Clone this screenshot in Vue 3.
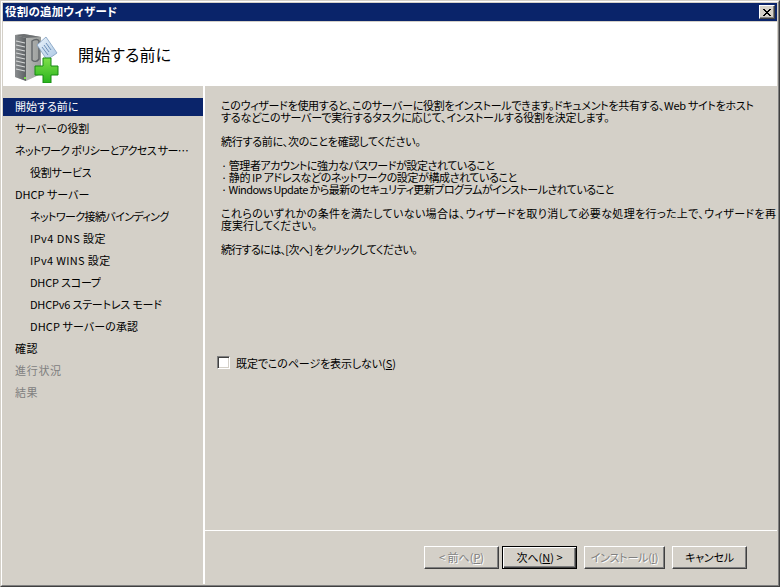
<script setup>
const steps = [
  { label: '開始する前に', active: true },
  { label: 'サーバーの役割', track: -0.1 },
  { label: 'ネットワーク ポリシーとアクセス サービス', track: -0.62 },
  { label: '役割サービス', sub: true, track: -0.3 },
  { label: 'DHCP サーバー' },
  { label: 'ネットワーク接続バインディング', sub: true, track: -0.6 },
  { label: 'IPv4 DNS 設定', sub: true, track: 0.45 },
  { label: 'IPv4 WINS 設定', sub: true, track: 0.35 },
  { label: 'DHCP スコープ', sub: true, track: -0.2 },
  { label: 'DHCPv6 ステートレス モード', sub: true, track: -0.2 },
  { label: 'DHCP サーバーの承認', sub: true, track: 0.1 },
  { label: '確認', track: 0.5 },
  { label: '進行状況', off: true, track: 0.7 },
  { label: '結果', off: true, track: 0.5 },
]

const lines = [
  { text: 'このウィザードを使用すると、このサーバーに役割をインストールできます。ドキュメントを共有する、Web サイトをホスト', track: -0.3 },
  { text: 'するなどこのサーバーで実行するタスクに応じて、インストールする役割を決定します。', track: -0.2, gap: true },
  { text: '続行する前に、次のことを確認してください。', track: -0.24, gap: true },
  { text: '· 管理者アカウントに強力なパスワードが設定されていること', track: -0.43 },
  { text: '· 静的 IP アドレスなどのネットワークの設定が構成されていること', track: -0.4 },
  { text: '· Windows Update から最新のセキュリティ更新プログラムがインストールされていること', track: -0.55, gap: true },
  { text: 'これらのいずれかの条件を満たしていない場合は、ウィザードを取り消して必要な処理を行った上で、ウィザードを再', track: 0.36 },
  { text: '度実行してください。', track: 0, gap: true },
  { text: '続行するには、[次へ] をクリックしてください。', track: -0.65 },
]

const trackStyle = (track) => (track ? { letterSpacing: `${track}px` } : null)
</script>

<template>
  <div class="window">
    <div class="window-inner">
      <div class="titlebar">
        <span class="title">役割の追加ウィザード</span>
        <button class="close" type="button" aria-label="閉じる">
          <svg width="8" height="7" viewBox="0 0 8 7"><path d="M0 0h2v1h1v1h2V1h1V0h2v1H7v1H6v1H5v1h1v1h1v1h1v1H6V6H5V5H3v1H2v1H0V6h1V5h1V4h1V3H2V2H1V1H0z" fill="#000"/></svg>
        </button>
      </div>
      <header class="header">
        <svg class="logo" width="47" height="51" viewBox="14 28 47 51">
          <defs>
            <linearGradient id="side" x1="0" y1="0" x2="1" y2="0">
              <stop offset="0" stop-color="#c9cac8"/><stop offset="1" stop-color="#9a9d9b"/>
            </linearGradient>
            <linearGradient id="front" x1="0" y1="0" x2="1" y2="0">
              <stop offset="0" stop-color="#8b8e90"/><stop offset="1" stop-color="#5b5f62"/>
            </linearGradient>
            <linearGradient id="tag" x1="0" y1="0" x2="1" y2="1">
              <stop offset="0" stop-color="#eef5fb"/><stop offset="1" stop-color="#a9c6e4"/>
            </linearGradient>
            <linearGradient id="green" x1="0" y1="0" x2="0" y2="1">
              <stop offset="0" stop-color="#7fe04a"/><stop offset="1" stop-color="#27b31c"/>
            </linearGradient>
          </defs>
          <path d="M15 31l9-1 17 3v37l-15 7-11-4z" fill="url(#side)"/>
          <path d="M15 31l11 3v43l-11-4z" fill="url(#front)"/>
          <path d="M15 31l9-1 17 3-15 1z" fill="#6d7072"/>
          <path d="M16 37l9 2M16 41l9 2M16 45l9 2M16 49l9 2M16 53l9 2M16 57l9 2M16 61l9 2M16 65l9 2" stroke="#d6d8d8" stroke-width="1.1" fill="none"/>
          <path d="M32 37c3-2 6-2 7 0v18c-2 3-5 3-7 1z" fill="none" stroke="#62666a" stroke-width="1.4"/>
          <rect x="24" y="73" width="2" height="2" fill="#7ce04a"/>
          <path d="M37 41l9-8 11 16-10 7z" fill="url(#tag)" stroke="#7f9dbf" stroke-width=".8"/>
          <path d="M44 41l5 7M42 43l6 8M46 39l5 7" stroke="#6d8fb8" stroke-width="1" fill="none"/>
          <path d="M43 54h8v8h7v9h-7v8h-8v-8h-8v-9h8z" fill="url(#green)" stroke="#178a12" stroke-width="1"/>
        </svg>
        <h1 class="heading">開始する前に</h1>
      </header>
      <div class="body">
        <nav class="nav">
          <div
            v-for="step in steps"
            :key="step.label"
            class="step"
            :class="{ active: step.active, sub: step.sub, off: step.off }"
          >
            <span class="step-label" :style="trackStyle(step.track)">{{ step.label }}</span>
          </div>
        </nav>
        <main class="main">
          <div class="content">
            <p
              v-for="line in lines"
              :key="line.text"
              class="line"
              :class="{ gap: line.gap }"
              :style="trackStyle(line.track)"
            >{{ line.text }}</p>
            <label class="check">
              <span class="box"></span>
              <span class="check-label">既定でこのページを表示しない(<u>S</u>)</span>
            </label>
          </div>
          <footer class="footer">
            <button class="btn disabled" type="button">&lt; 前へ(<u>P</u>)</button>
            <button class="btn default" type="button">次へ(<u>N</u>) &gt;</button>
            <button class="btn disabled install" type="button">インストール(<u>I</u>)</button>
            <button class="btn cancel" type="button">キャンセル</button>
          </footer>
        </main>
      </div>
    </div>
  </div>
</template>

<style>
html, body { margin: 0; padding: 0; background: #d4d0c8; }
</style>

<style scoped>
.window {
  box-sizing: border-box;
  width: 780px;
  height: 587px;
  border: 1px solid;
  border-color: #d4d0c8 #404040 #404040 #d4d0c8;
  font: 11px/12px "Noto Sans CJK JP", "Liberation Sans", sans-serif;
  font-feature-settings: "palt";
  color: #000;
  background: #d4d0c8;
}
.window-inner {
  box-sizing: border-box;
  height: 100%;
  border: 1px solid;
  border-color: #fff #808080 #808080 #fff;
  padding: 1px;
  display: flex;
  flex-direction: column;
}
.titlebar {
  height: 18px;
  flex: none;
  margin-bottom: 1px;
  background: #0a246a;
  color: #fff;
  display: flex;
  align-items: center;
  justify-content: space-between;
  padding: 0 2px 0 2px;
}
.title { font-weight: 700; font-size: 11.5px; letter-spacing: 0.2px; margin-bottom: 2px; }
.close {
  box-sizing: border-box;
  width: 16px;
  height: 14px;
  padding: 0;
  background: #d4d0c8;
  border: 1px solid;
  border-color: #fff #404040 #404040 #fff;
  box-shadow: inset -1px -1px 0 #808080;
  display: flex;
  align-items: center;
  justify-content: center;
}
.header {
  flex: none;
  height: 64px;
  background: #fff;
  display: flex;
  align-items: center;
  padding-left: 11px;
}
.logo { flex: none; margin-top: 6px; }
.heading {
  margin: 0 0 0 17px;
  font-size: 16px;
  line-height: 20px;
  font-weight: 400;
  letter-spacing: 0.15px;
}
.body { flex: 1; display: flex; min-height: 0; }
.nav {
  flex: none;
  box-sizing: border-box;
  width: 200px;
  padding-top: 12px;
  display: flex;
  flex-direction: column;
  gap: 4px;
}
.step {
  box-sizing: border-box;
  height: 18px;
  padding: 0 12px 2px 12px;
  display: flex;
  align-items: center;
}
.step-label {
  overflow: hidden;
  white-space: nowrap;
  text-overflow: ellipsis;
}
.step.sub { padding-left: 27px; }
.step.active { background: #0a246a; color: #fff; }
.step.off { color: #808080; }
.main {
  flex: 1;
  min-width: 0;
  border-left: 2px solid #fff;
  display: flex;
  flex-direction: column;
}
.content {
  flex: 1;
  padding: 13px 0 0 16px;
}
.line {
  margin: 0;
  white-space: nowrap;
  line-height: 12px;
}
.line.gap { margin-bottom: 12px; }
.check {
  display: flex;
  align-items: center;
  gap: 6px;
  margin: 101px 0 0 -4px;
}
.check-label { letter-spacing: -0.1px; }
.box {
  box-sizing: border-box;
  width: 13px;
  height: 13px;
  background: #fff;
  border: 1px solid;
  border-color: #808080 #fff #fff #808080;
  box-shadow: inset 1px 1px 0 #404040, inset -1px -1px 0 #d4d0c8;
}
.footer {
  flex: none;
  box-sizing: border-box;
  height: 54px;
  border-top: 1px solid #fff;
  padding: 15px 30px 0 0;
  display: flex;
  justify-content: flex-end;
  align-items: flex-start;
  gap: 7px;
}
.btn {
  box-sizing: border-box;
  width: 75px;
  height: 23px;
  padding: 0 0 2px;
  font: inherit;
  font-feature-settings: inherit;
  color: #000;
  background: #d4d0c8;
  border: 1px solid;
  border-color: #fff #404040 #404040 #fff;
  box-shadow: inset -1px -1px 0 #808080;
}
.btn.install { width: 81px; letter-spacing: -0.2px; }
.btn.cancel { letter-spacing: -0.2px; }
.btn.default {
  border-color: #000;
  box-shadow: inset 1px 1px 0 #fff, inset -1px -1px 0 #404040, inset -2px -2px 0 #808080;
  margin-left: -4px;
}
.btn.disabled {
  color: #808080;
  text-shadow: 1px 1px 0 #fff;
}
</style>
